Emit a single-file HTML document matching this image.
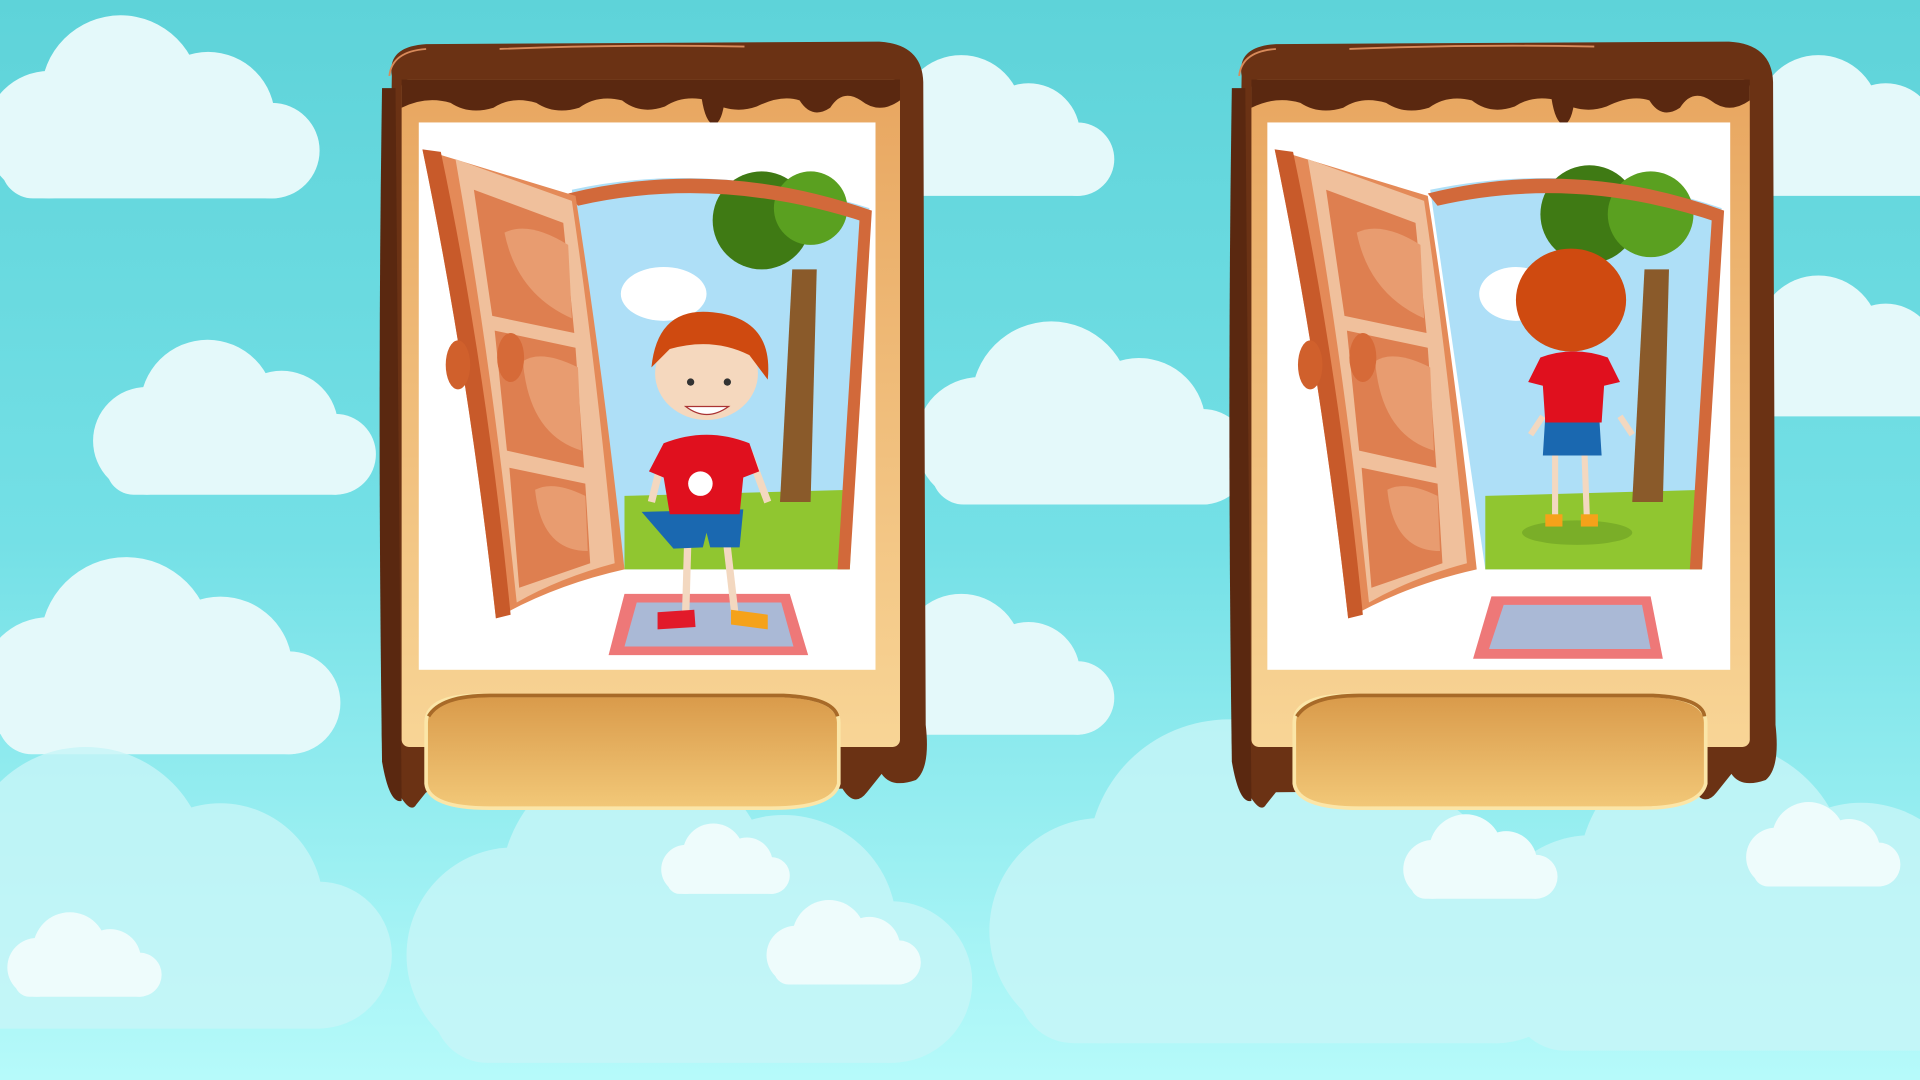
<!DOCTYPE html>
<html><head><meta charset="utf-8"><style>
html,body{margin:0;padding:0;width:1920px;height:1080px;overflow:hidden;background:#7fe6ea}
svg{display:block}
</style></head><body>
<svg width="1920" height="1080" viewBox="0 0 1568 882" preserveAspectRatio="none" xmlns="http://www.w3.org/2000/svg">
<defs>
<linearGradient id="sky" x1="0" y1="0" x2="0" y2="1">
<stop offset="0" stop-color="#5ed3d9"/><stop offset="0.5" stop-color="#74e0e6"/><stop offset="1" stop-color="#b6fafa"/></linearGradient>
<linearGradient id="panel" x1="0" y1="0" x2="0" y2="1">
<stop offset="0" stop-color="#e8a660"/><stop offset="1" stop-color="#f8d596"/></linearGradient>
<linearGradient id="btn" x1="0" y1="0" x2="0" y2="1">
<stop offset="0" stop-color="#d99a4a"/><stop offset="1" stop-color="#f2c878"/></linearGradient>
<g id="cloud">
<circle cx="0" cy="0" r="40"/><circle cx="45" cy="-25" r="50"/><circle cx="100" cy="-10" r="42"/><circle cx="140" cy="10" r="30"/><rect x="-30" y="0" width="190" height="40" rx="20"/></g>
<g id="frame">
<path d="M12 30 Q8 6 40 4 L410 2 Q445 4 446 35 L448 560 Q452 595 440 605 Q420 612 412 600 L400 615 Q390 628 380 612 L40 615 L32 625 Q28 632 20 620 Q2 600 4 560 Z" fill="#6b3214"/>
<path d="M4 40 Q0 300 4 590 Q10 625 20 622 L15 40 Z" fill="#5a2810"/>
<rect x="20" y="33" width="407" height="545" rx="6" fill="url(#panel)"/>
<path d="M20 33 L427 33 L427 50 Q410 62 395 50 Q380 40 370 56 Q355 66 345 50 Q330 45 310 55 Q290 62 270 50 Q250 45 235 55 Q215 62 200 50 Q180 45 165 56 Q145 62 130 52 Q110 46 95 56 Q75 62 60 52 Q40 46 20 56 Z" fill="#5a2810"/>
<path d="M265 48 Q268 68 275 70 Q282 68 284 48 Z" fill="#5a2810"/>
<path d="M10 30 Q12 10 40 8 M100 8 Q200 4 300 6" stroke="#d88a5a" stroke-width="1.5" fill="none"/>
</g>
<g id="door">
<path d="M3 22 L128 60 Q150 200 168 365 Q110 378 63 405 Q40 200 3 22 Z" fill="#e48a58"/>
<path d="M3 22 L18 24 Q55 200 75 402 L63 405 Q40 200 3 22 Z" fill="#c85a2a"/>
<path d="M30 30 L125 64 Q145 200 160 360 Q115 372 80 392 Q60 200 30 30 Z" fill="#f0c09c"/>
<path d="M45 55 L118 82 L127 172 L60 158 Z" fill="#de7f50"/>
<path d="M62 170 L128 184 L135 282 L72 268 Z" fill="#de7f50"/>
<path d="M74 282 L136 295 L140 360 L82 380 Z" fill="#de7f50"/>
<path d="M70 90 Q90 80 122 100 L125 160 Q80 140 70 90 Z" fill="#e89c70"/>
<path d="M85 195 Q100 185 130 200 L133 268 Q90 255 85 195 Z" fill="#e89c70"/>
<path d="M95 300 Q110 292 136 305 L138 350 Q100 350 95 300 Z" fill="#e89c70"/>
<ellipse cx="32" cy="198" rx="10" ry="20" fill="#d0602c"/>
<ellipse cx="75" cy="192" rx="11" ry="20" fill="#d66a38"/>
</g>
</defs>
<rect width="1568" height="882" fill="url(#sky)"/>
<g fill="#e4f9fa">
<use href="#cloud" transform="translate(40,110) scale(1.3)"/>
<use href="#cloud" transform="translate(120,360) scale(1.1)"/>
<use href="#cloud" transform="translate(40,560) scale(1.4)"/>
<use href="#cloud" transform="translate(740,560) scale(1)"/>
<use href="#cloud" transform="translate(740,120) scale(1)"/>
<use href="#cloud" transform="translate(800,360) scale(1.3)"/>
<use href="#cloud" transform="translate(1440,300) scale(1)"/>
<use href="#cloud" transform="translate(1440,120) scale(1)"/>
</g>
<g fill="#c8f6f8" opacity="0.8">
<use href="#cloud" transform="translate(-20,760) scale(2)"/>
<use href="#cloud" transform="translate(420,780) scale(2.2)"/>
<use href="#cloud" transform="translate(900,760) scale(2.3)"/>
<use href="#cloud" transform="translate(1300,770) scale(2.2)"/>
</g>
<g fill="#eefcfc">
<use href="#cloud" transform="translate(30,790) scale(0.6)"/>
<use href="#cloud" transform="translate(560,710) scale(0.5)"/>
<use href="#cloud" transform="translate(650,780) scale(0.6)"/>
<use href="#cloud" transform="translate(1170,710) scale(0.6)"/>
<use href="#cloud" transform="translate(1450,700) scale(0.6)"/>
</g>

<!-- card 1 -->
<g transform="translate(308,32)"><use href="#frame"/></g>
<rect x="342" y="100" width="373" height="447" fill="#fff"/>
<g transform="translate(342,100)">
<path d="M125 55 Q240 30 368 70 L350 365 L168 365 Z" fill="#aedff7"/>
<path d="M168 305 L355 300 L352 365 L168 365 Z" fill="#90c630"/>
<ellipse cx="200" cy="140" rx="35" ry="22" fill="#fff"/>
<path d="M305 120 L325 120 L320 310 L295 310 Z" fill="#8a5a2a"/>
<circle cx="280" cy="80" r="40" fill="#3f7a14"/><circle cx="320" cy="70" r="30" fill="#5aa020"/>
<path d="M122 58 Q245 28 370 72 L366 82 Q245 42 130 68 Z" fill="#d2693a"/>
<path d="M370 72 L352 365 L342 365 L360 78 Z" fill="#d2693a"/>
<use href="#door"/>
<path d="M168 385 L303 385 L318 435 L155 435 Z" fill="#ee7878"/>
<path d="M178 392 L296 392 L306 428 L168 428 Z" fill="#aab9d6"/>
<line x1="220" y1="330" x2="218" y2="400" stroke="#f3d8c0" stroke-width="6"/>
<line x1="250" y1="330" x2="258" y2="400" stroke="#f3d8c0" stroke-width="6"/>
<path d="M195 400 L225 398 L226 412 L195 414 Z" fill="#e21a2a"/>
<path d="M255 398 L285 402 L285 414 L255 410 Z" fill="#f5a21a"/>
<path d="M200 270 L190 310 M270 270 L285 310" stroke="#f3d8c0" stroke-width="6"/>
<path d="M182 318 L265 316 L262 347 L238 347 L235 335 L232 347 L208 348 Z" fill="#1a68b0"/>
<path d="M200 262 Q235 248 270 262 L278 285 L265 290 L262 320 L205 320 L200 290 L188 285 Z" fill="#e0101e"/>
<circle cx="230" cy="295" r="10" fill="#fff"/>
<ellipse cx="235" cy="205" rx="42" ry="38" fill="#f5d8be"/>
<path d="M190 200 Q195 150 240 155 Q290 160 285 210 L270 190 Q240 175 205 185 Z" fill="#cf4a10"/>
<path d="M218 232 Q235 245 253 232 Z" fill="#fff" stroke="#a33" stroke-width="1"/>
<circle cx="222" cy="212" r="3" fill="#333"/><circle cx="252" cy="212" r="3" fill="#333"/>
</g>
<path d="M348 590 Q348 566 400 568 L640 568 Q685 570 685 590 L685 640 Q680 660 630 660 L400 660 Q350 660 348 640 Z" fill="url(#btn)" stroke="#fbe6a8" stroke-width="3"/>
<path d="M350 585 Q360 568 400 568 L640 568 Q680 570 684 585" fill="none" stroke="#a86a28" stroke-width="3"/>

<!-- card 2 -->
<g transform="translate(1002,32)"><use href="#frame"/></g>
<rect x="1035" y="100" width="378" height="447" fill="#fff"/>
<g transform="translate(1038,100)">
<path d="M130 55 Q250 30 368 70 L350 365 L175 365 Z" fill="#aedff7"/>
<path d="M175 305 L355 300 L352 365 L175 365 Z" fill="#90c630"/>
<ellipse cx="200" cy="140" rx="30" ry="22" fill="#fff"/>
<path d="M305 120 L325 120 L320 310 L295 310 Z" fill="#8a5a2a"/>
<circle cx="260" cy="75" r="40" fill="#3f7a14"/><circle cx="310" cy="75" r="35" fill="#5aa020"/>
<path d="M128 58 Q250 28 370 72 L366 82 Q250 42 136 68 Z" fill="#d2693a"/>
<path d="M370 72 L352 365 L342 365 L360 78 Z" fill="#d2693a"/>
<use href="#door"/>
<path d="M180 387 L310 387 L320 438 L165 438 Z" fill="#ee7878"/>
<path d="M190 394 L303 394 L310 430 L178 430 Z" fill="#aab9d6"/>
<ellipse cx="250" cy="335" rx="45" ry="10" fill="#7aae28"/>
<line x1="232" y1="270" x2="232" y2="325" stroke="#f3d8c0" stroke-width="5"/>
<line x1="256" y1="270" x2="258" y2="325" stroke="#f3d8c0" stroke-width="5"/>
<rect x="224" y="320" width="14" height="10" fill="#f5a21a"/><rect x="253" y="320" width="14" height="10" fill="#f5a21a"/>
<path d="M222 240 L212 255 M285 240 L295 255" stroke="#f3d8c0" stroke-width="5"/>
<path d="M224 240 L268 240 L270 272 L222 272 Z" fill="#1a68b0"/>
<path d="M220 192 Q247 182 275 192 L285 212 L272 215 L270 245 L224 245 L222 215 L210 212 Z" fill="#e0101e"/>
<ellipse cx="245" cy="145" rx="45" ry="42" fill="#cf4a10"/>
</g>
<path d="M1057 590 Q1057 566 1110 568 L1350 568 Q1393 570 1393 590 L1393 640 Q1388 660 1340 660 L1110 660 Q1060 660 1057 640 Z" fill="url(#btn)" stroke="#fbe6a8" stroke-width="3"/>
<path d="M1059 585 Q1070 568 1110 568 L1350 568 Q1390 570 1392 585" fill="none" stroke="#a86a28" stroke-width="3"/>
</svg>
</body></html>
